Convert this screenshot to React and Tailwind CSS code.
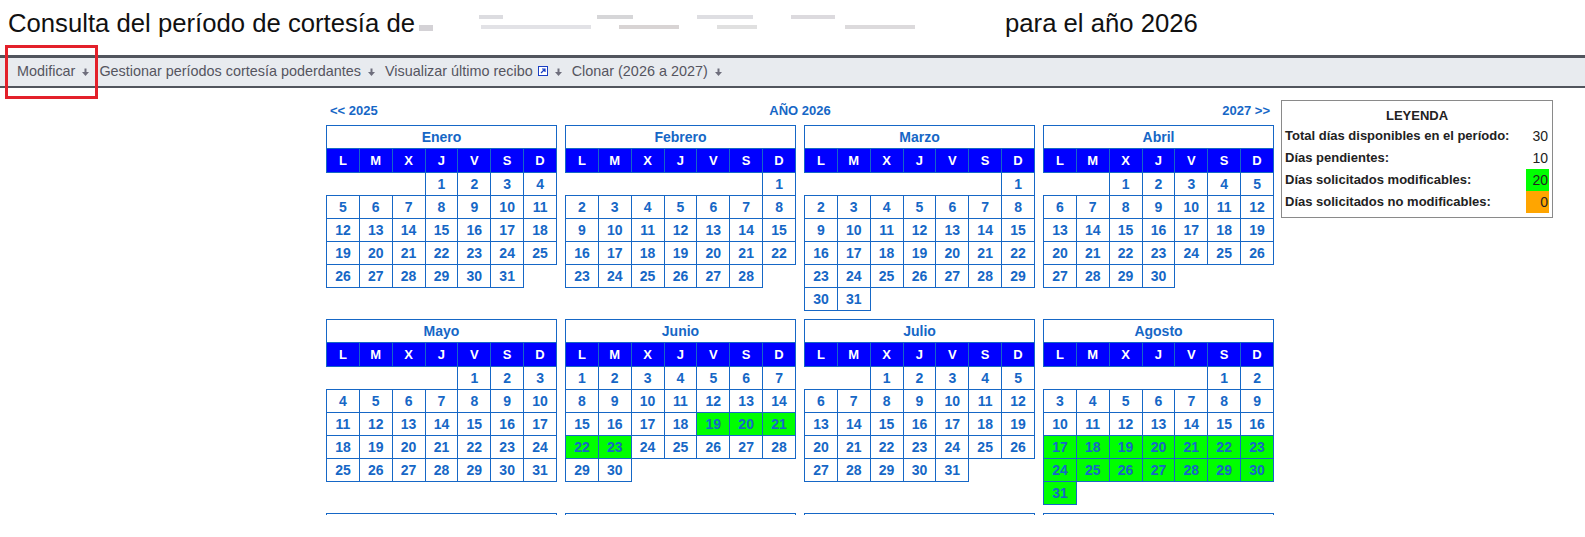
import React from "react";

const DAYS = ["L", "M", "X", "J", "V", "S", "D"];

const MONTHS = [
  { name: "Enero", first: 3, days: 31 },
  { name: "Febrero", first: 6, days: 28 },
  { name: "Marzo", first: 6, days: 31 },
  { name: "Abril", first: 2, days: 30 },
  { name: "Mayo", first: 4, days: 31 },
  { name: "Junio", first: 0, days: 30, green: [19, 20, 21, 22, 23] },
  { name: "Julio", first: 2, days: 31 },
  { name: "Agosto", first: 5, days: 31, green: [17, 18, 19, 20, 21, 22, 23, 24, 25, 26, 27, 28, 29, 30, 31] },
  { name: "Septiembre", first: 1, days: 30 },
  { name: "Octubre", first: 3, days: 31 },
  { name: "Noviembre", first: 6, days: 30 },
  { name: "Diciembre", first: 1, days: 31 },
];

function DownArrow() {
  return (
    <svg width="9" height="10" viewBox="0 0 9 10" className="ml-[6px] mr-[9px] inline-block">
      <path d="M4.5 1.5v4" stroke="#6e6e7c" strokeWidth="2" />
      <path d="M1 5h7l-3.5 4z" fill="#6e6e7c" />
    </svg>
  );
}

function ExtLink() {
  return (
    <svg width="10" height="10" viewBox="0 0 10 10" className="ml-[5px] -mt-[2px] inline-block">
      <rect x="0.5" y="0.5" width="9" height="9" fill="#fff" stroke="#1a3fc4" />
      <path d="M3 7l4-4M4 3h3v3" stroke="#1a3fc4" strokeWidth="1.2" fill="none" />
    </svg>
  );
}

function Month({ name, first, days, green = [] }) {
  const cells = [];
  for (let i = 0; i < first; i++) cells.push(null);
  for (let d = 1; d <= days; d++) cells.push(d);
  while (cells.length % 7) cells.push(null);
  const weeks = [];
  for (let i = 0; i < cells.length; i += 7) weeks.push(cells.slice(i, i + 7));

  return (
    <table className="w-[231px] table-fixed border-collapse text-[14px] font-bold">
      <thead>
        <tr>
          <th colSpan={7} className="h-[23px] border border-[#1667c6] bg-white text-[#1667c6]">
            {name}
          </th>
        </tr>
        <tr>
          {DAYS.map((d) => (
            <th key={d} className="h-[24px] border border-[#1667c6] bg-[#0000ff] text-[13px] text-white">
              {d}
            </th>
          ))}
        </tr>
      </thead>
      <tbody>
        {weeks.map((w, i) => (
          <tr key={i}>
            {w.map((d, j) =>
              d ? (
                <td
                  key={j}
                  className={
                    "h-[23px] border border-[#1667c6] text-center text-[#1667c6] " +
                    (green.includes(d) ? "bg-[#00ff00]" : "bg-white")
                  }
                >
                  {d}
                </td>
              ) : (
                <td key={j} className="h-[23px]" />
              )
            )}
          </tr>
        ))}
      </tbody>
    </table>
  );
}

function Legend() {
  const rows = [
    ["Total días disponibles en el período:", "30", ""],
    ["Días pendientes:", "10", ""],
    ["Días solicitados modificables:", "20", "bg-[#00ff00]"],
    ["Días solicitados no modificables:", "0", "bg-[#ffa500]"],
  ];
  return (
    <div className="w-[272px] border border-[#8a8a8a] px-[3px] pt-[6px] pb-[4px] text-[13px] text-[#222]">
      <div className="text-center font-bold leading-[18px]">LEYENDA</div>
      {rows.map(([label, value, bg]) => (
        <div key={label} className="flex h-[22px] items-center justify-between">
          <span className="font-bold">{label}</span>
          <span className={"flex h-full w-[23px] items-center justify-end pr-[1px] text-[14px] " + bg}>
            {value}
          </span>
        </div>
      ))}
    </div>
  );
}

export default function App() {
  return (
    <div className="h-[515px] overflow-hidden bg-white font-['Liberation_Sans',Arial,sans-serif] text-[#111]">
      <h1 className="flex items-center px-[8px] pt-[8px] pb-[17px] text-[25.7px] leading-[30px] text-[#111]">
        <span>Consulta del período de cortesía de</span>
        <span className="mx-[4px] flex h-[26px] w-[582px] flex-col justify-center gap-[6px] blur-[0.6px]">
          <span className="flex gap-[8px] pl-[60px]">
            <span className="h-[4px] w-[24px] bg-[#dcdce0]" />
            <span className="ml-[86px] h-[4px] w-[36px] bg-[#d6d6d8]" />
            <span className="ml-[56px] h-[4px] w-[56px] bg-[#dedee2]" />
            <span className="ml-[30px] h-[4px] w-[44px] bg-[#dcdade]" />
          </span>
          <span className="flex gap-[8px]">
            <span className="h-[6px] w-[14px] bg-[#d4d2d6]" />
            <span className="ml-[40px] h-[4px] w-[110px] bg-[#e2e2e6]" />
            <span className="ml-[20px] h-[4px] w-[60px] bg-[#d8d4d4]" />
            <span className="ml-[30px] h-[4px] w-[40px] bg-[#e0e0e0]" />
            <span className="ml-[80px] h-[4px] w-[70px] bg-[#dcdadc]" />
          </span>
        </span>
        <span>para el año 2026</span>
      </h1>

      <div className="relative">
        <div className="flex h-[33px] items-center border-t-[3px] border-b-[2px] border-[#51555d] bg-[#e8ebef] pl-[17px] text-[14.4px] text-[#55555f]">
          <span>Modificar</span>
          <DownArrow />
          <span>Gestionar períodos cortesía poderdantes</span>
          <DownArrow />
          <span>Visualizar último recibo</span>
          <ExtLink />
          <DownArrow />
          <span>Clonar (2026 a 2027)</span>
          <DownArrow />
        </div>
        <div className="absolute left-[5px] top-[-10px] h-[54px] w-[93px] border-[3px] border-[#e3202a]" />
      </div>

      <div className="flex items-start gap-[7px] pl-[326px] pt-[12px]">
        <div className="w-[948px]">
          <div className="flex h-[25px] items-start justify-between px-[4px] pt-[1px] text-[13px] font-bold text-[#1667c6]">
            <span>&lt;&lt; 2025</span>
            <span>AÑO 2026</span>
            <span>2027 &gt;&gt;</span>
          </div>
          <div className="grid grid-cols-4 items-start gap-x-[8px] gap-y-[8px]">
            {MONTHS.map((m) => (
              <Month key={m.name} {...m} />
            ))}
          </div>
        </div>
        <Legend />
      </div>
    </div>
  );
}
